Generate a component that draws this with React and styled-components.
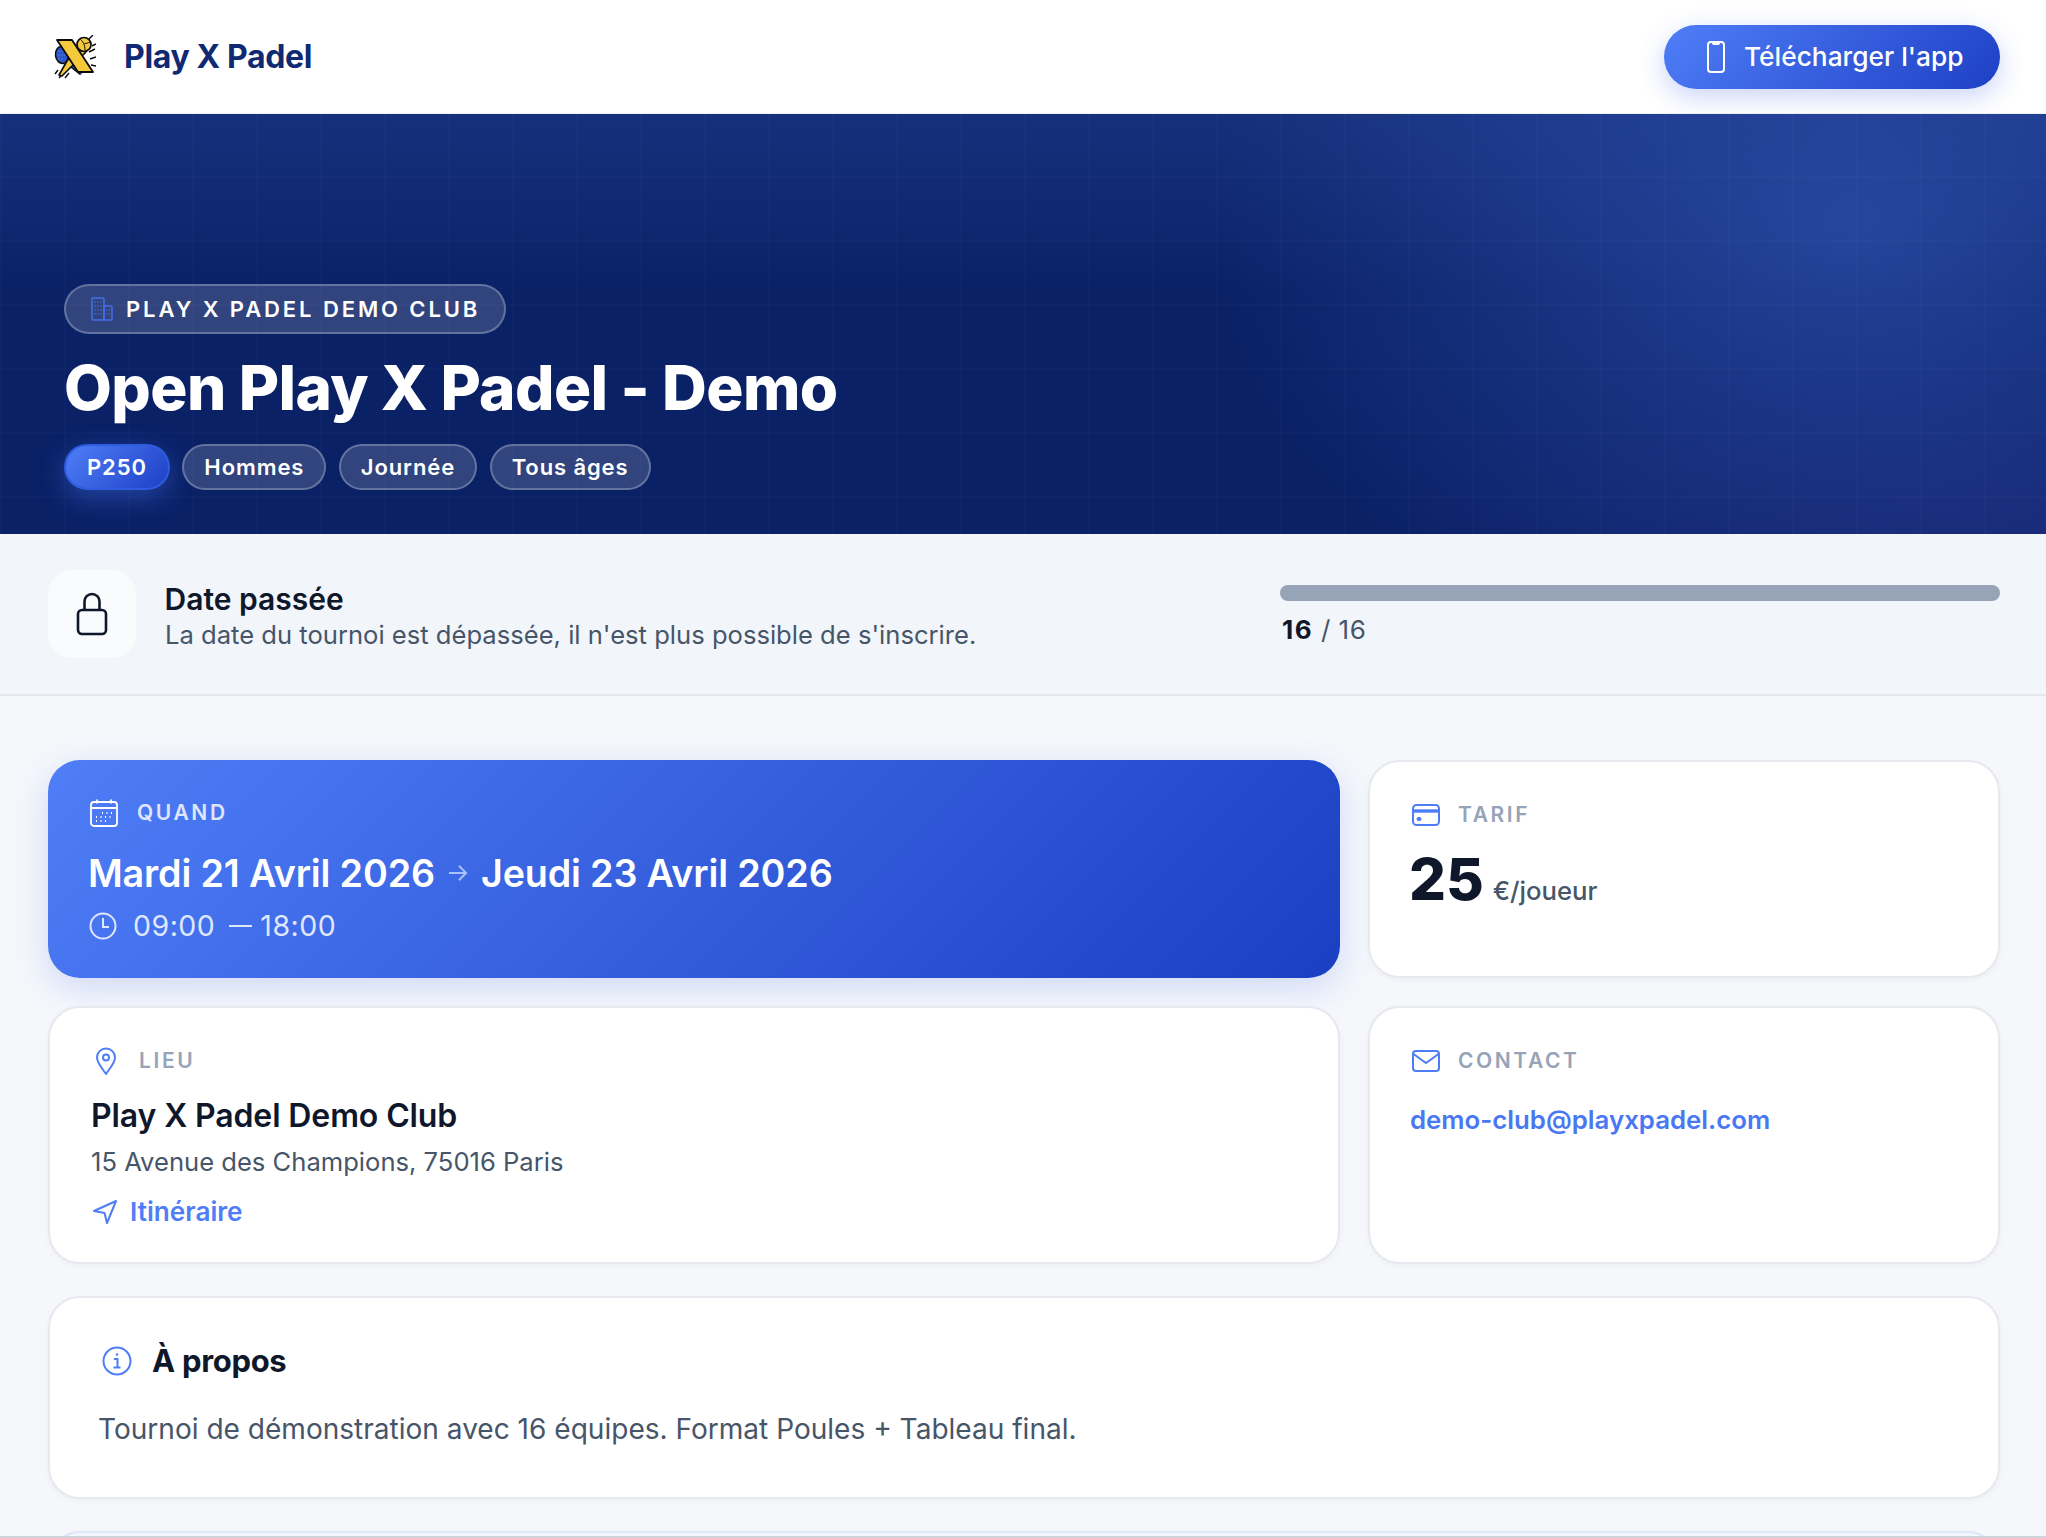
import React from 'react';
import styled, { createGlobalStyle } from 'styled-components';

const Global = createGlobalStyle`
  html, body { margin: 0; padding: 0; background: #f5f7fb; }
  body { font-family: Inter, "Noto Sans", sans-serif; color: #0f172a; -webkit-font-smoothing: antialiased; }
  * { box-sizing: border-box; }
`;

const Page = styled.div`
  height: 1538px;
  overflow: hidden;
  background: #f5f7fb;
  border-bottom: 2px solid #cfd2d8;
`;

const Header = styled.header`
  height: 114px;
  background: #fff;
  padding: 0 46px 0 52px;
  display: flex;
  align-items: center;
  justify-content: space-between;
  border-bottom: 1px solid #eef0f4;
`;
const Brand = styled.div`
  display: flex;
  align-items: center;
  gap: 28px;
`;
const BrandName = styled.span`
  font-size: 32px;
  font-weight: 700;
  color: #0f2a72;
  letter-spacing: -0.35px;
`;
const AppButton = styled.button`
  width: 336px;
  height: 64px;
  border: none;
  border-radius: 32px;
  background: linear-gradient(135deg, #4f7ef8 0%, #1e40c4 100%);
  color: #fff;
  font: 500 26.3px Inter, sans-serif;
  display: flex;
  align-items: center;
  justify-content: flex-start;
  gap: 19px;
  box-shadow: 0 8px 26px rgba(60, 100, 235, 0.28);
  padding: 0 0 0 43px;
`;

const Hero = styled.section`
  height: 420px;
  position: relative;
  padding: 170px 0 0 64px;
  background:
    linear-gradient(90deg, rgba(255,255,255,0.015) 2px, transparent 2px) 0 0 / 64px 64px,
    linear-gradient(0deg, rgba(255,255,255,0.015) 2px, transparent 2px) 0 0 / 64px 64px,
    radial-gradient(ellipse 640px 440px at 90.5% 27%, rgba(52, 88, 185, 0.62), transparent 100%),
    radial-gradient(ellipse 700px 200px at 100% 100%, rgba(40, 40, 130, 0.35), transparent 100%),
    linear-gradient(180deg, rgba(30, 60, 140, 0.58) 0%, rgba(13, 36, 108, 0) 42%),
    #0a2166;
`;
const ClubPill = styled.div`
  display: inline-flex;
  align-items: center;
  gap: 13px;
  height: 50px;
  padding: 0 24px 0 25px;
  border-radius: 25px;
  background: rgba(255, 255, 255, 0.16);
  border: 2px solid rgba(255, 255, 255, 0.25);
  color: #fff;
  font-size: 22px;
  font-weight: 600;
  letter-spacing: 2.9px;
`;
const Title = styled.h1`
  margin: 16px 0 0;
  font-size: 62px;
  font-weight: 800;
  line-height: 76px;
  color: #fff;
  letter-spacing: -0.6px;
`;
const Chips = styled.div`
  display: flex;
  gap: 12.5px;
  margin-top: 18px;
`;
const Chip = styled.span`
  height: 46px;
  padding: 0 ${p => (p.$primary ? 21 : 20)}px;
  display: flex;
  align-items: center;
  border-radius: 23px;
  font-size: 22px;
  font-weight: 600;
  letter-spacing: 0.9px;
  color: #fff;
  background: ${p => (p.$primary ? 'linear-gradient(135deg, #4f7ef8, #1e40c4)' : 'rgba(255,255,255,0.16)')};
  border: 2px solid ${p => (p.$primary ? '#2f5ce0' : 'rgba(255,255,255,0.25)')};
  box-shadow: ${p => (p.$primary ? '0 8px 26px rgba(70,115,245,0.42)' : 'none')};
`;

const StatusBar = styled.section`
  height: 162px;
  background: #f2f5fa;
  border-bottom: 2px solid #e5e7eb;
  padding: 36px 46px 0 48px;
  display: flex;
  justify-content: space-between;
`;
const StatusLeft = styled.div`
  display: flex;
  gap: 29px;
`;
const LockBox = styled.div`
  width: 88px;
  height: 88px;
  border-radius: 24px;
  background: #f9fbfd;
  display: flex;
  align-items: center;
  justify-content: center;
`;
const StatusText = styled.div`
  display: flex;
  flex-direction: column;
  padding-top: 11px;
`;
const StatusTitle = styled.div`
  font-size: 30px;
  font-weight: 600;
  line-height: 36px;
  color: #0f172a;
  margin-left: -0.5px;
`;
const StatusSub = styled.div`
  font-size: 25.6px;
  line-height: 36px;
  color: #475569;
`;
const Capacity = styled.div`
  width: 720px;
  padding-top: 15px;
`;
const Bar = styled.div`
  height: 16px;
  border-radius: 8px;
  background: #97a3b6;
`;
const CapacityText = styled.div`
  margin-top: 11px;
  padding-left: 2px;
  font-size: 26px;
  line-height: 36px;
  color: #475569;
  letter-spacing: 0.5px;
  b { font-weight: 700; color: #0f172a; letter-spacing: 1.5px; }
`;

const Grid = styled.main`
  padding: 64px 46px 0 48px;
  display: grid;
  grid-template-columns: 1292px 632px;
  grid-template-rows: 218px 258px auto auto;
  column-gap: 28px;
  row-gap: 28px;
`;
const Card = styled.div`
  background: #fff;
  border: 2px solid #e7e9ef;
  border-radius: 32px;
  box-shadow: 0 2px 6px rgba(15, 23, 42, 0.04);
  padding: 38px 40px 0 ${p => p.$pl || 41}px;
`;
const WhenCard = styled.div`
  border-radius: 32px;
  background: linear-gradient(135deg, #4f7ef8 0%, #1b3fc2 100%);
  box-shadow: 0 10px 34px rgba(60, 100, 235, 0.2);
  padding: 38px 40px 0 41px;
  color: #fff;
`;
const Label = styled.div`
  display: flex;
  align-items: center;
  gap: ${p => p.$gap || 18}px;
  padding-left: ${p => p.$indent || 0}px;
  font-size: 21px;
  line-height: 30px;
  font-weight: 600;
  letter-spacing: 2.6px;
  color: ${p => (p.$light ? '#dde6fd' : '#97a3b8')};
`;
const DateLine = styled.div`
  display: flex;
  align-items: center;
  gap: 13px;
  margin: 20px 0 0 -1px;
  font-size: 37.7px;
  line-height: 50px;
  font-weight: 600;
  letter-spacing: -0.15px;
`;
const TimeLine = styled.div`
  display: flex;
  align-items: center;
  gap: 16px;
  margin-top: 8px;
  font-size: 28.5px;
  line-height: 40px;
  color: #dfe7fd;
  letter-spacing: 0.5px;
`;
const TimeRange = styled.span`
  display: flex;
  align-items: center;
`;
const Dash = styled.span`
  width: 23px;
  height: 2.5px;
  margin: 0 8px 0 14px;
  background: #dfe7fd;
`;
const Price = styled.div`
  display: flex;
  align-items: baseline;
  gap: 9px;
  margin-top: 15px;
  margin-left: -3px;
`;
const PriceValue = styled.span`
  font-size: 58px;
  line-height: 68px;
  font-weight: 800;
  color: #0f172a;
`;
const PriceUnit = styled.span`
  font-size: 25.7px;
  font-weight: 500;
  color: #475569;
`;
const VenueName = styled.div`
  font-size: 32px;
  line-height: 40px;
  font-weight: 600;
  margin-top: 20px;
  color: #0f172a;
  letter-spacing: -0.12px;
`;
const Address = styled.div`
  font-size: 25.6px;
  line-height: 36px;
  margin-top: 8px;
  color: #475569;
`;
const Directions = styled.div`
  display: flex;
  align-items: center;
  gap: 12px;
  margin: 14px 0 0 1px;
  font-size: 26.2px;
  line-height: 36px;
  font-weight: 600;
  color: #4f7df7;
`;
const Email = styled.div`
  margin-top: 24px;
  margin-left: -2px;
  font-size: 25.8px;
  line-height: 40px;
  font-weight: 600;
  color: #4a78f4;
`;
const About = styled.section`
  grid-column: 1 / -1;
  height: 203px;
  margin-top: 4px;
  background: #fff;
  border: 2px solid #e7e9ef;
  border-radius: 32px;
  box-shadow: 0 2px 6px rgba(15, 23, 42, 0.04);
  padding: 43px 48px 0 48px;
`;
const AboutHead = styled.div`
  display: flex;
  align-items: center;
  gap: 20px;
  font-size: 31px;
  line-height: 40px;
  font-weight: 700;
  color: #0f172a;
  letter-spacing: -0.3px;
  padding-left: 4px;
`;
const AboutText = styled.p`
  margin: 28px 0 0;
  font-size: 28.05px;
  line-height: 40px;
  color: #475569;
`;
const NextCard = styled.div`
  grid-column: 1 / -1;
  height: 80px;
  margin-top: 4px;
  border: 2px solid #dfe7fb;
  border-radius: 32px;
  background: #f3f6fe;
`;

const Svg = styled.svg`
  display: block;
  flex: none;
`;

const Logo = () => (
  <Svg width="44" height="44" viewBox="0 0 44 44" aria-hidden="true">
    <path d="M37 17l6-3M38 24l6-2M39 30l5 1M37 4l4-4M40 11l4-2M13 36l-6 7M17 38l-4 5M6 35l-3 4" stroke="#0b0b0b" strokeWidth="1.4" fill="none" />
    <ellipse cx="10" cy="20" rx="6.5" ry="8.5" transform="rotate(-8 10 20)" fill="#2f56c9" stroke="#0b0b0b" strokeWidth="1.5" />
    <path d="M7 16h.01M10 16h.01M13 16h.01M7 20h.01M10 20h.01M13 20h.01M7 24h.01M10 24h.01" stroke="#7f9cf0" strokeWidth="1.2" strokeLinecap="round" />
    <path d="M20 30l10 8" stroke="#0b0b0b" strokeWidth="6" />
    <path d="M20 30l10 8" stroke="#2f56c9" strokeWidth="3.4" />
    <path d="M27 12l7 5-24 24-3-1 8-14z" fill="#f4c93a" stroke="#0b0b0b" strokeWidth="1.6" strokeLinejoin="round" />
    <path d="M5 5h15l21 32H26z" fill="#f4c93a" stroke="#0b0b0b" strokeWidth="1.8" strokeLinejoin="round" />
    <circle cx="32" cy="9.5" r="7" fill="#f4c93a" stroke="#0b0b0b" strokeWidth="1.7" />
    <path d="M28.5 4.5c2.5 2 4.5 5 4.5 11M38 7c-2 1-3.5 1.5-5.5 1.5" stroke="#0b0b0b" strokeWidth="1" fill="none" />
  </Svg>
);

const Phone = () => (
  <Svg width="18" height="32" viewBox="0 0 18 32" fill="none" stroke="#fff" strokeWidth="2">
    <rect x="1" y="1" width="16" height="30" rx="3" />
    <path d="M6 1.5c0 1.2.6 1.6 1.4 1.6h3.2c.8 0 1.4-.4 1.4-1.6" />
  </Svg>
);

const Building = () => (
  <Svg width="22" height="24" viewBox="0 0 22 24" fill="none" stroke="#4470e6" strokeWidth="1.5">
    <rect x="1" y="1" width="12" height="22" rx="1" />
    <rect x="13" y="9" width="8" height="14" rx="1" />
    <path d="M4 5h.01M7 5h.01M10 5h.01M4 9h.01M7 9h.01M10 9h.01M4 13h.01M7 13h.01M10 13h.01M4 17h.01M7 17h.01M10 17h.01M16 13h.01M18.5 13h.01M16 17h.01M18.5 17h.01" strokeLinecap="round" />
  </Svg>
);

const Lock = () => (
  <Svg width="32" height="44" viewBox="0 0 32 44" fill="none" stroke="#0f172a" strokeWidth="2.6">
    <rect x="2" y="18" width="28" height="24" rx="4" />
    <path d="M8.5 18V9.5a7.5 7.5 0 0 1 15 0V18" />
  </Svg>
);

const Calendar = () => (
  <Svg width="30" height="30" viewBox="0 0 30 30" fill="none" stroke="#fff" strokeWidth="1.8">
    <rect x="2" y="4" width="26" height="24" rx="3" />
    <path d="M2 10h26M8 1.5v4M22 1.5v4" />
    <path d="M13 15h1M17.5 15h1M22 15h1M7 19h1M11.5 19h1M16 19h1M20.5 19h1M7 23h1M11.5 23h1M16 23h1" strokeWidth="2" />
  </Svg>
);

const Arrow = () => (
  <Svg width="20" height="18" viewBox="0 0 22 20" fill="none" stroke="#a9c0fa" strokeWidth="2.2">
    <path d="M1 10h19M12 2l8 8-8 8" />
  </Svg>
);

const Clock = () => (
  <Svg width="28" height="28" viewBox="0 0 28 28" fill="none" stroke="#dfe7fd" strokeWidth="2">
    <circle cx="14" cy="14" r="12.5" />
    <path d="M14 6v9h6" />
  </Svg>
);

const CardIcon = () => (
  <Svg width="28" height="22" viewBox="0 0 28 22" fill="none" stroke="#4f7df7" strokeWidth="2">
    <rect x="1" y="1" width="26" height="20" rx="3.5" />
    <path d="M1 7h26" strokeWidth="3.4" />
    <rect x="4.5" y="13" width="5" height="4" rx="2" fill="#4f7df7" stroke="none" />
  </Svg>
);

const Pin = () => (
  <Svg width="22" height="28" viewBox="0 0 22 28" fill="none" stroke="#4f7df7" strokeWidth="2">
    <path d="M11 27C7 21 2 16 2 10.5a9 9 0 0 1 18 0C20 16 15 21 11 27z" strokeLinejoin="round" />
    <circle cx="11" cy="10.5" r="3" />
  </Svg>
);

const Nav = () => (
  <Svg width="26" height="26" viewBox="0 0 26 26" fill="none" stroke="#4f7df7" strokeWidth="2" strokeLinejoin="round">
    <path d="M2 12L24 2 15 24l-2.5-10z" />
  </Svg>
);

const Mail = () => (
  <Svg width="28" height="24" viewBox="0 0 28 24" fill="none" stroke="#4f7df7" strokeWidth="2">
    <rect x="1" y="2" width="26" height="20" rx="3" />
    <path d="M1.5 5L14 14 26.5 5" />
  </Svg>
);

const Info = () => (
  <Svg width="30" height="30" viewBox="0 0 30 30" fill="none" stroke="#4f7df7" strokeWidth="2">
    <circle cx="15" cy="15" r="13.5" />
    <path d="M12 13h3.5v8M11.5 21.5h7" />
    <circle cx="15" cy="8.5" r="1.2" fill="#4f7df7" stroke="none" />
  </Svg>
);

export default function App() {
  return (
    <Page>
      <Global />
      <Header>
        <Brand>
          <Logo />
          <BrandName>Play X Padel</BrandName>
        </Brand>
        <AppButton><Phone />Télécharger l'app</AppButton>
      </Header>
      <Hero>
        <ClubPill><Building />PLAY X PADEL DEMO CLUB</ClubPill>
        <Title>Open Play X Padel - Demo</Title>
        <Chips>
          <Chip $primary>P250</Chip>
          <Chip>Hommes</Chip>
          <Chip>Journée</Chip>
          <Chip>Tous âges</Chip>
        </Chips>
      </Hero>
      <StatusBar>
        <StatusLeft>
          <LockBox><Lock /></LockBox>
          <StatusText>
            <StatusTitle>Date passée</StatusTitle>
            <StatusSub>La date du tournoi est dépassée, il n'est plus possible de s'inscrire.</StatusSub>
          </StatusText>
        </StatusLeft>
        <Capacity>
          <Bar />
          <CapacityText><b>16</b> / 16</CapacityText>
        </Capacity>
      </StatusBar>
      <Grid>
        <WhenCard>
          <Label $light><Calendar />QUAND</Label>
          <DateLine>Mardi 21 Avril 2026<Arrow />Jeudi 23 Avril 2026</DateLine>
          <TimeLine><Clock /><TimeRange>09:00<Dash />18:00</TimeRange></TimeLine>
        </WhenCard>
        <Card $pl={42}>
          <Label><CardIcon />TARIF</Label>
          <Price><PriceValue>25</PriceValue><PriceUnit>€/joueur</PriceUnit></Price>
        </Card>
        <Card>
          <Label $gap={22} $indent={4}><Pin />LIEU</Label>
          <VenueName>Play X Padel Demo Club</VenueName>
          <Address>15 Avenue des Champions, 75016 Paris</Address>
          <Directions><Nav />Itinéraire</Directions>
        </Card>
        <Card $pl={42}>
          <Label><Mail />CONTACT</Label>
          <Email>demo-club@playxpadel.com</Email>
        </Card>
        <About>
          <AboutHead><Info />À propos</AboutHead>
          <AboutText>Tournoi de démonstration avec 16 équipes. Format Poules + Tableau final.</AboutText>
        </About>
        <NextCard />
      </Grid>
    </Page>
  );
}
